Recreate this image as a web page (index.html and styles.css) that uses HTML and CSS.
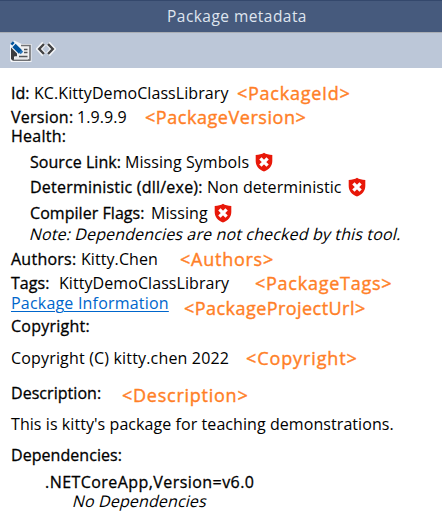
FILE: index.html
```html
<!DOCTYPE html>
<html lang="en">
<head>
<meta charset="utf-8">
<title>Package metadata</title>
<link rel="stylesheet" href="styles.css">
</head>
<body>
<svg class="defs" width="0" height="0">
  <symbol id="shield" viewBox="0 0 18 20">
    <path d="M9 .7 C11 2 14 2.8 17.3 3 V9 C17.3 14 14 17.8 9 19.5 C4 17.8 .7 14 .7 9 V3 C4 2.8 7 2 9 .7Z" fill="#e81809"/>
    <path d="M5.4 6.4 L12.6 13.6 M12.6 6.4 L5.4 13.6" stroke="#fff" stroke-width="3.3"/>
  </symbol>
</svg>
<header class="title">Package metadata</header>
<nav class="toolbar">
  <svg class="edit" width="24" height="24" viewBox="0 0 24 24">
    <path d="M1 5 L5 .5 L13 4 H22.5 V22 H2 L1 20Z" fill="#f3f5f8"/>
    <path d="M12 5.5 H21 V20 H6" fill="#f0f0f1" stroke="#707174" stroke-width="1.6"/>
    <path d="M2 7.5 L8 13.5 V16.5 H5 V20.5 H3.5 L2 19Z" fill="#3c3c3e"/>
    <path d="M6 16.5 H19 V20 H5Z" fill="#e8e9eb"/>
    <path d="M4 20.3 H21" stroke="#707174" stroke-width="1.4"/>
    <path d="M2.4 4.6 L4.8 2.2" stroke="#00539c" stroke-width="2.4"/>
    <path d="M5 5.5 L11.5 12" stroke="#00539c" stroke-width="4.6"/>
    <path d="M15 9.5 H18.5 M15 12.5 H18.5 M10 16.5 H18.5" stroke="#505357" stroke-width="1.3"/>
    <path d="M11 13.5 L13.5 11" stroke="#2875b8" stroke-width="2"/>
  </svg>
  <svg class="code" width="20" height="16" viewBox="0 0 20 16">
    <path d="M8 2.5 L3 8 L8 13.5 M12 2.5 L17 8 L12 13.5" fill="none" stroke="#f3f5f8" stroke-width="5"/>
    <path d="M8 3 L3.2 8 L8 13 M12 3 L16.8 8 L12 13" fill="none" stroke="#424244" stroke-width="2.4"/>
  </svg>
</nav>
<main class="meta">
  <div class="row id"><b>Id:</b><span>KC.KittyDemoClassLibrary</span><em>&lt;PackageId&gt;</em></div>
  <div class="row version"><b>Version:</b><span>1.9.9.9</span><em>&lt;PackageVersion&gt;</em></div>
  <div class="row health"><b>Health:</b></div>
  <div class="row source"><b>Source Link:</b><span>Missing Symbols</span><svg class="shield"><use href="#shield"/></svg></div>
  <div class="row determ"><b>Deterministic (dll/exe):</b><span>Non deterministic</span><svg class="shield"><use href="#shield"/></svg></div>
  <div class="row flags"><b>Compiler Flags:</b><span>Missing</span><svg class="shield"><use href="#shield"/></svg></div>
  <div class="row note"><i>Note: Dependencies are not checked by this tool.</i></div>
  <div class="row authors"><b>Authors:</b><span>Kitty.Chen</span><em>&lt;Authors&gt;</em></div>
  <div class="row tags"><b>Tags:</b><span>KittyDemoClassLibrary</span><em>&lt;PackageTags&gt;</em></div>
  <div class="row info"><a href="#">Package Information</a><em>&lt;PackageProjectUrl&gt;</em></div>
  <div class="row copy-label"><b>Copyright:</b></div>
  <div class="row copy"><span>Copyright (C) kitty.chen 2022</span><em>&lt;Copyright&gt;</em></div>
  <div class="row desc-label"><b>Description:</b><em>&lt;Description&gt;</em></div>
  <div class="row desc"><span>This is kitty's package for teaching demonstrations.</span></div>
  <div class="row deps"><b>Dependencies:</b></div>
  <div class="row framework"><b>.NETCoreApp,Version=v6.0</b></div>
  <div class="row none"><i>No Dependencies</i></div>
</main>
</body>
</html>
```

FILE: styles.css
```css
body {
  margin: 0;
  width: 442px;
  height: 518px;
  overflow: hidden;
  background: #fff;
  color: #000;
  font: 16px/20px "Open Sans", "Noto Sans", sans-serif;
}
.defs { display: none; }
.title {
  box-sizing: border-box;
  height: 33px;
  padding: 5px 0 0 32px;
  border-top: 1px solid #34486c;
  border-bottom: 1px solid #aaaeb4;
  background: #465a7d;
  color: #dfe5ef;
  text-align: center;
  letter-spacing: 0.45px;
  font-size: 15.5px;
}
.toolbar {
  display: flex;
  height: 35px;
  background: #bcc7d8;
}
.edit { margin: 7px 0 0 9px; }
.code { margin: 8px 0 0 3px; }
.meta {
  display: flex;
  flex-direction: column;
  padding: 15px 0 0 11px;
}
.row {
  display: grid;
  height: 20px;
  justify-items: start;
  white-space: nowrap;
  letter-spacing: 0.07px;
}
.row b {
  font-weight: 400;
  letter-spacing: 0.05px;
  -webkit-text-stroke: 0.3px #000;
}
.row i {
  font-style: normal;
  letter-spacing: 0.12px;
  transform: skewX(-14deg);
}
.row a { color: #0066cc; letter-spacing: 0.2px; text-decoration: underline; text-underline-offset: 2px; text-decoration-thickness: 1px; }
.row em {
  color: #ff7f27;
  font-size: 18px;
  font-style: normal;
  font-weight: 400;
  letter-spacing: 0.75px;
  -webkit-text-stroke: 0.4px #ff7f27;
}
.shield { width: 18px; height: 20px; }
.id { grid-template-columns: 23px 203px auto; }
.version { margin-top: 4px; grid-template-columns: 66px 68px auto; }
.health { margin-top: -1px; }
.source { margin: 6px 0 0 19px; grid-template-columns: 95px 130px auto; }
.determ { margin: 5px 0 0 19px; grid-template-columns: 177px 141px auto; }
.flags { margin: 6px 0 0 19px; grid-template-columns: 121px 63px auto; }
.note { margin: 2px 0 0 19px; }
.authors { margin-top: 4px; grid-template-columns: 70px 99px auto; }
.tags { margin-top: 4px; grid-template-columns: 48px 196px auto; }
.info { grid-template-columns: 173px auto; }
.copy-label { margin-top: 3px; }
.copy { margin-top: 12px; grid-template-columns: 235px auto; }
.desc-label { margin-top: 15px; grid-template-columns: 111px auto; }
.version b, .health b, .authors b, .copy-label b { letter-spacing: 0.25px; }
.determ b { letter-spacing: 0.22px; }
.framework b { letter-spacing: 0.44px; }
.copy span { letter-spacing: 0.17px; }
.version em { letter-spacing: 0.55px; }
.info em { padding-top: 5px; letter-spacing: 0.45px; }
.copy em { letter-spacing: 0.9px; }
.desc-label em { padding-top: 2px; }
.desc, .deps { margin-top: 11px; }
.framework { margin: 7px 0 0 34px; }
.none { margin-left: 62px; }
.note i, .none i { line-height: 19px; letter-spacing: 0.14px; }
```
